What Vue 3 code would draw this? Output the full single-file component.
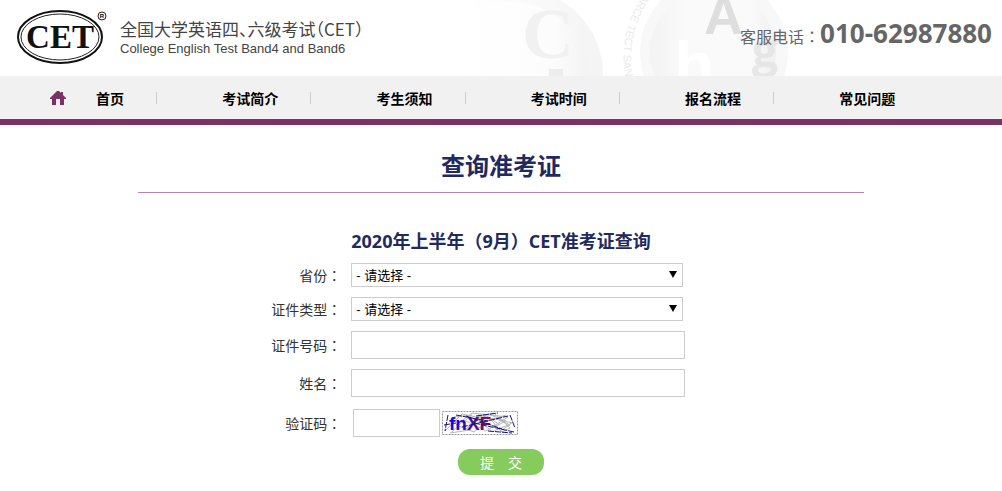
<script setup>
import { ref } from 'vue';

const navItems = ['考试简介', '考生须知', '考试时间', '报名流程', '常见问题'];

const province = ref('');
const idType = ref('');
const idNumber = ref('');
const fullName = ref('');
const captcha = ref('');
</script>

<template>
  <div class="page">
    <header class="header">
      <!-- faded type-wheel artwork behind the header -->
      <svg class="header-art" width="380" height="76" viewBox="450 0 380 76" aria-hidden="true">
        <defs>
          <linearGradient id="rimFade" gradientUnits="userSpaceOnUse" x1="470" x2="600" y1="0" y2="0">
            <stop offset="0" stop-color="#fff" />
            <stop offset="1" stop-color="#f4f4f4" />
          </linearGradient>
          <linearGradient id="faceFade" gradientUnits="userSpaceOnUse" x1="470" x2="590" y1="0" y2="0">
            <stop offset="0" stop-color="#fff" />
            <stop offset="0.7" stop-color="#fcfcfc" />
            <stop offset="1" stop-color="#f3f3f3" />
          </linearGradient>
          <linearGradient id="wheelFade" x1="0" x2="1" y1="0" y2="0">
            <stop offset="0" stop-color="#f3f3f3" />
            <stop offset="0.3" stop-color="#fafafa" />
            <stop offset="0.8" stop-color="#fafafa" />
            <stop offset="1" stop-color="#f0f0f0" />
          </linearGradient>
        </defs>
        <circle cx="518" cy="74" r="85" fill="url(#rimFade)" />
        <circle cx="512" cy="79" r="77" fill="url(#faceFade)" />
        <text x="522" y="58" class="art-serif" fill="#f1f1f1">C</text>
        <rect x="549" y="69" width="14" height="7" fill="#ededed" />
        <circle cx="714" cy="52" r="74" fill="#f8f8f8" />
        <circle cx="713" cy="52" r="63" fill="url(#wheelFade)" />
        <text x="674" y="88" class="art-letter" font-size="66" fill="#fff">h</text>
        <text x="704" y="34" class="art-letter" font-size="54" fill="#dedede">A</text>
        <text x="752" y="67" class="art-g" fill="#e6e6e6">g</text>
        <path id="artRim" d="M644 -6 Q614 36 628 90" fill="none" />
        <text font-size="11" fill="#eaeaea" class="art-rim"><textPath href="#artRim">ARCE TECT SAN</textPath></text>
      </svg>

      <a class="brand" href="#">
        <svg class="logo" width="92" height="58" viewBox="0 0 92 58" aria-hidden="true">
          <ellipse cx="44" cy="29" rx="42" ry="26" fill="#fff" stroke="#111" stroke-width="2" />
          <ellipse cx="44" cy="29" rx="39" ry="23" fill="none" stroke="#222" stroke-width="1" />
          <text x="44" y="40" text-anchor="middle" class="logo-text">CET</text>
          <circle cx="86" cy="8" r="4" fill="none" stroke="#222" stroke-width="1" />
          <text x="86" y="10" text-anchor="middle" class="logo-mark">R</text>
        </svg>
        <span class="brand-names">
          <span class="brand-cn">全国大学英语四、六级考试（CET）</span>
          <span class="brand-en">College English Test Band4 and Band6</span>
        </span>
      </a>

      <p class="hotline">客服电话<span class="mark">：</span><strong>010-62987880</strong></p>
    </header>

    <nav class="nav">
      <a class="nav-item home" href="#">
        <svg width="16" height="14" viewBox="0 0 16 14" aria-hidden="true">
          <path d="M7 0 H9 L11 2 V1 H13 V4 L16 7 V8 H14 V14 H10 V8 H6 V14 H2 V8 H0 V7 Z" fill="#7b3264" />
        </svg>
        首页
      </a>
      <a v-for="item in navItems" :key="item" class="nav-item" href="#">{{ item }}</a>
    </nav>

    <main class="content">
      <h1 class="title">查询准考证</h1>

      <form class="form" @submit.prevent>
        <h2 class="subtitle">2020年上半年<span class="mark">（</span>9月<span class="mark">）</span>CET准考证查询</h2>

        <div class="row">
          <label for="province">省份<span class="mark">：</span></label>
          <div class="select-box">
            <select id="province" v-model="province">
              <option value="">- 请选择 -</option>
            </select>
          </div>
        </div>
        <div class="row">
          <label for="idType">证件类型<span class="mark">：</span></label>
          <div class="select-box">
            <select id="idType" v-model="idType">
              <option value="">- 请选择 -</option>
            </select>
          </div>
        </div>
        <div class="row">
          <label for="idNumber">证件号码<span class="mark">：</span></label>
          <input id="idNumber" v-model="idNumber" type="text" />
        </div>
        <div class="row">
          <label for="fullName">姓名<span class="mark">：</span></label>
          <input id="fullName" v-model="fullName" type="text" />
        </div>
        <div class="row captcha-row">
          <label for="captcha">验证码<span class="mark">：</span></label>
          <div class="captcha">
            <input id="captcha" v-model="captcha" type="text" />
            <svg width="76" height="24" viewBox="0 0 76 24" aria-hidden="true">
              <defs>
                <linearGradient id="captchaInk" x1="0" x2="1">
                  <stop offset="0" stop-color="#0a0af0" />
                  <stop offset="0.45" stop-color="#3a0a9c" />
                  <stop offset="1" stop-color="#9a1040" />
                </linearGradient>
              </defs>
              <rect x="0.5" y="0.5" width="75" height="23" fill="#fff" stroke="#999" stroke-dasharray="2 1" />
              <path
                d="M3 20 L20 3 L34 6 L52 2 L68 17 L60 21 L48 8 L32 21 L14 14 L30 2 L66 6 L44 20 L22 9 L10 21 M36 4 L70 12 L50 21 L40 12 L64 4 M24 18 L42 3 L58 14 M46 3 L64 10 L52 16 M12 6 L30 4 L20 12 M8 22 L28 19 M54 7 L68 14 L58 20"
                fill="none" stroke="#b5b5b5"
              />
              <text x="7" y="19" class="captcha-text" fill="url(#captchaInk)">fnXF</text>
              <path
                d="M6 4 L3 20 M2 14 L14 12 M14 4 L46 10 M34 5 L56 2 M20 16 L66 5 M32 12 L72 21 M46 20 L70 22 M68 4 L73 17 M24 5 L60 18"
                fill="none" stroke="#14147c" stroke-dasharray="6 1"
              />
            </svg>
          </div>
        </div>

        <button class="submit" type="submit">提&#x3000;交</button>
      </form>
    </main>
  </div>
</template>

<style>
body {
  margin: 0;
  background: #fff;
}
</style>

<style scoped>
.page {
  font-family: "Open Sans", "Noto Sans CJK SC", sans-serif;
  font-size: 14px;
  color: #333;
}

/* full-width punctuation centred in its box */
.mark {
  font-family: "Noto Sans CJK TC", sans-serif;
}

/* header */
.header {
  position: relative;
  display: flex;
  justify-content: space-between;
  height: 76px;
  padding: 0 10px 0 16px;
}

.header-art {
  position: absolute;
  top: 0;
  left: 450px;
}

.art-letter {
  font-family: "Liberation Sans", sans-serif;
  font-weight: 700;
}

.art-serif {
  font-family: "Liberation Serif", serif;
  font-size: 72px;
  font-weight: 700;
}

.art-g {
  font-family: "Open Sans", sans-serif;
  font-size: 46px;
  font-weight: 700;
}

.art-rim {
  font-family: "Liberation Sans", sans-serif;
}

.brand {
  position: relative;
  display: flex;
  align-items: flex-start;
  gap: 12px;
  padding-top: 8px;
  color: #444;
  text-decoration: none;
}

.logo-text {
  font-family: "Liberation Serif", serif;
  font-size: 33px;
  font-weight: 700;
  fill: #111;
}

.logo-mark {
  font-family: "Liberation Sans", sans-serif;
  font-size: 6px;
  font-weight: 700;
}

.brand-names {
  display: flex;
  flex-direction: column;
  padding-top: 9px;
}

.brand-cn {
  font-family: "Noto Sans CJK SC", sans-serif;
  font-size: 17px;
  line-height: 24px;
  font-feature-settings: "halt";
}

.brand-en {
  font-family: "Liberation Sans", sans-serif;
  font-size: 13px;
  line-height: 16px;
}

.hotline {
  position: relative;
  margin: 0;
  padding-top: 15px;
  font-size: 16px;
  line-height: 36px;
  color: #666;
}

.hotline strong {
  font-size: 26px;
}

/* nav */
.nav {
  display: flex;
  height: 43px;
  background: #f1f1f1;
  border-bottom: 6px solid #7b3264;
}

.nav-item {
  display: flex;
  align-items: center;
  justify-content: center;
  box-sizing: border-box;
  width: 15.4%;
  padding-left: 32px;
  font-weight: 700;
  color: #000;
  text-decoration: none;
  background: linear-gradient(#ccc, #ccc) no-repeat right 16px / 1px 12px;
}

.nav-item:last-child {
  background: none;
}

.nav-item.home {
  justify-content: flex-start;
  gap: 30px;
  width: 157px;
  padding-left: 50px;
}

/* content */
.content {
  max-width: 726px;
  margin: 0 auto;
}

.title {
  margin: 0;
  padding: 23px 0 8px;
  font-size: 24px;
  line-height: 36px;
  text-align: center;
  color: #1f2a60;
  border-bottom: 1px solid #c77fae;
}

.form {
  display: flex;
  flex-direction: column;
  gap: 10px;
  padding-top: 35px;
}

.subtitle {
  margin: 0;
  font-size: 18px;
  line-height: 24px;
  text-align: center;
  color: #1f2a60;
}

.row {
  display: flex;
  align-items: center;
  gap: 10px;
}

.row label {
  width: 28%;
  text-align: right;
}

.row input,
.row select {
  box-sizing: border-box;
  height: 28px;
  padding: 0 4px;
  font-family: "Liberation Sans", "Noto Sans CJK SC", sans-serif;
  font-size: 13px;
  color: #000;
  background: #fff;
  border: 1px solid #ccc;
  border-radius: 0;
}

.row input {
  width: 46%;
}

.select-box {
  position: relative;
  display: flex;
  width: 332px;
}

.select-box::after {
  content: "";
  position: absolute;
  top: 8px;
  right: 6px;
  border: 4px solid transparent;
  border-top: 7px solid #000;
  border-bottom: 0;
  pointer-events: none;
}

.row select {
  width: 100%;
  height: 24px;
  appearance: none;
}

.captcha-row {
  padding-top: 2px;
}

.captcha {
  display: flex;
  align-items: center;
  gap: 2px;
  padding-left: 2px;
}

.captcha input {
  width: 87px;
}

.captcha-text {
  font-family: "Liberation Sans", sans-serif;
  font-size: 19px;
  font-weight: 700;
}

.submit {
  align-self: center;
  width: 86px;
  height: 26px;
  margin-top: 2px;
  padding: 0;
  font-family: inherit;
  font-size: 14px;
  color: #fff;
  background: #85cc5d;
  border: 0;
  border-radius: 12px;
  cursor: pointer;
}
</style>
